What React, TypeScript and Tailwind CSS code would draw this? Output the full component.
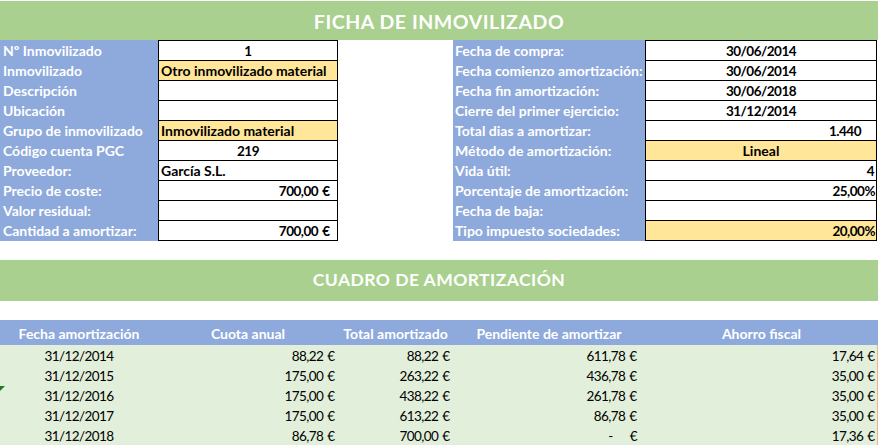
import React from "react";

type Cell = {
  label: string;
  value?: string;
  align?: "left" | "center" | "right";
  yellow?: boolean;
  pr?: string;
  num?: boolean;
};

const leftRows: Cell[] = [
  { label: "Nº Inmovilizado", value: "1", align: "center", num: true },
  { label: "Inmovilizado", value: "Otro inmovilizado material", align: "left", yellow: true },
  { label: "Descripción" },
  { label: "Ubicación" },
  { label: "Grupo de inmovilizado", value: "Inmovilizado material", align: "left", yellow: true },
  { label: "Código cuenta PGC", value: "219", align: "center", num: true },
  { label: "Proveedor:", value: "García S.L.", align: "left" },
  { label: "Precio de coste:", value: "700,00 €", align: "right", pr: "pr-[7px]", num: true },
  { label: "Valor residual:" },
  { label: "Cantidad a amortizar:", value: "700,00 €", align: "right", pr: "pr-[7px]", num: true },
];

const rightRows: Cell[] = [
  { label: "Fecha de compra:", value: "30/06/2014", align: "center", num: true },
  { label: "Fecha comienzo amortización:", value: "30/06/2014", align: "center", num: true },
  { label: "Fecha fin amortización:", value: "30/06/2018", align: "center", num: true },
  { label: "Cierre del primer ejercicio:", value: "31/12/2014", align: "center", num: true },
  { label: "Total dias a amortizar:", value: "1.440", align: "right", pr: "pr-[15px]", num: true },
  { label: "Método de amortización:", value: "Lineal", align: "center", yellow: true },
  { label: "Vida útil:", value: "4", align: "right", pr: "pr-[2px]", num: true },
  { label: "Porcentaje de amortización:", value: "25,00%", align: "right", pr: "pr-[1px]", num: true },
  { label: "Fecha de baja:" },
  { label: "Tipo impuesto sociedades:", value: "20,00%", align: "right", yellow: true, pr: "pr-[1px]", num: true },
];

const tableRows = [
  ["31/12/2014", "88,22 €", "88,22 €", "611,78 €", "17,64 €"],
  ["31/12/2015", "175,00 €", "263,22 €", "436,78 €", "35,00 €"],
  ["31/12/2016", "175,00 €", "438,22 €", "261,78 €", "35,00 €"],
  ["31/12/2017", "175,00 €", "613,22 €", "86,78 €", "35,00 €"],
  ["31/12/2018", "86,78 €", "700,00 €", "-", "17,36 €"],
];

function Val({ v }: { v: string }) {
  if (v.endsWith(" €")) {
    return (
      <>
        <span>{v.slice(0, -2)}</span>
        <span className="ml-[4px] tracking-normal">€</span>
      </>
    );
  }
  return <>{v}</>;
}

function FormBlock({
  rows,
  labelW,
  valueW,
  labelPl,
}: {
  rows: Cell[];
  labelW: string;
  valueW: string;
  labelPl: string;
}) {
  return (
    <div className="flex">
      <div className={`${labelW} bg-[#8ea9db] flex flex-col h-[201px]`}>
        {rows.map((r, i) => (
          <div
            key={i}
            className={`h-[20px] flex items-end pb-[2px] ${labelPl} text-white font-bold text-[14px] leading-none whitespace-nowrap`}
          >
            {r.label}
          </div>
        ))}
      </div>
      <div className={`${valueW} border-x border-b border-black flex flex-col`}>
        {rows.map((r, i) => (
          <div
            key={i}
            className={`h-[20px] border-t border-black flex items-end pb-[2px] font-bold leading-none text-black whitespace-nowrap ${
              r.num ? "text-[13.5px] tracking-[-0.5px]" : "text-[14px]"
            } ${r.yellow ? "bg-[#ffe699]" : "bg-white"} ${
              r.align === "center"
                ? "justify-center"
                : r.align === "right"
                ? `justify-end ${r.pr ?? ""}`
                : "justify-start pl-[2px]"
            }`}
          >
            {r.value ? <Val v={r.value} /> : ""}
          </div>
        ))}
      </div>
    </div>
  );
}

export default function App() {
  return (
    <div
      className="w-[878px] h-[446px] bg-white overflow-hidden relative"
      style={{ fontFamily: "Lato, 'Open Sans', sans-serif" }}
    >
      <div className="pt-[1px]">
        <div className="h-[39px] pt-[3px] bg-[#a9d08e] flex items-center justify-center text-white font-bold text-[19.5px] tracking-[0.55px]">
          FICHA DE INMOVILIZADO
        </div>
      </div>

      <div className="flex">
        <FormBlock rows={leftRows} labelW="w-[158px]" valueW="w-[180px]" labelPl="pl-[3px]" />
        <div className="w-[115px]" />
        <FormBlock rows={rightRows} labelW="w-[192px]" valueW="w-[232px]" labelPl="pl-[2px]" />
      </div>

      <div className="h-[19px]" />
      <div className="h-[41px] bg-[#a9d08e] flex items-center justify-center text-white font-bold text-[17.5px] tracking-[0.45px]">
        CUADRO DE AMORTIZACIÓN
      </div>
      <div className="h-[19px]" />

      <div className="grid grid-cols-[158px_180px_115px_192px_233px] h-[25px] bg-[#8ea9db] text-white font-bold text-[14px] leading-none">
        {["Fecha amortización", "Cuota anual", "Total amortizado", "Pendiente de amortizar", "Ahorro fiscal"].map(
          (h) => (
            <div key={h} className="flex items-end justify-center pb-[4px] whitespace-nowrap">
              {h}
            </div>
          )
        )}
      </div>
      <div className="bg-[#e2efda] border-r border-[#f4b183]">
        {tableRows.map((r, i) => (
          <div
            key={i}
            className="grid grid-cols-[158px_180px_115px_192px_232px] h-[20px] text-black text-[13.5px] tracking-[-0.6px] leading-none"
          >
            <div className="flex items-end justify-center pb-[2px]">{r[0]}</div>
            <div className="flex items-end justify-end pb-[2px] pr-[3px]">
              <Val v={r[1]} />
            </div>
            <div className="flex items-end justify-end pb-[2px] pr-[3px]">
              <Val v={r[2]} />
            </div>
            <div className="flex items-end justify-end pb-[2px] pr-[8px]">
              {r[3] === "-" ? (
                <>
                  <span>-</span>
                  <span className="ml-[17px]">€</span>
                </>
              ) : (
                <Val v={r[3]} />
              )}
            </div>
            <div className="flex items-end justify-end pb-[2px] pr-[2px]">
              <Val v={r[4]} />
            </div>
          </div>
        ))}
      </div>

      <div className="absolute left-0 top-[386px] w-0 h-0 border-t-[5px] border-t-[#1e7b1e] border-r-[5px] border-r-transparent" />
    </div>
  );
}
